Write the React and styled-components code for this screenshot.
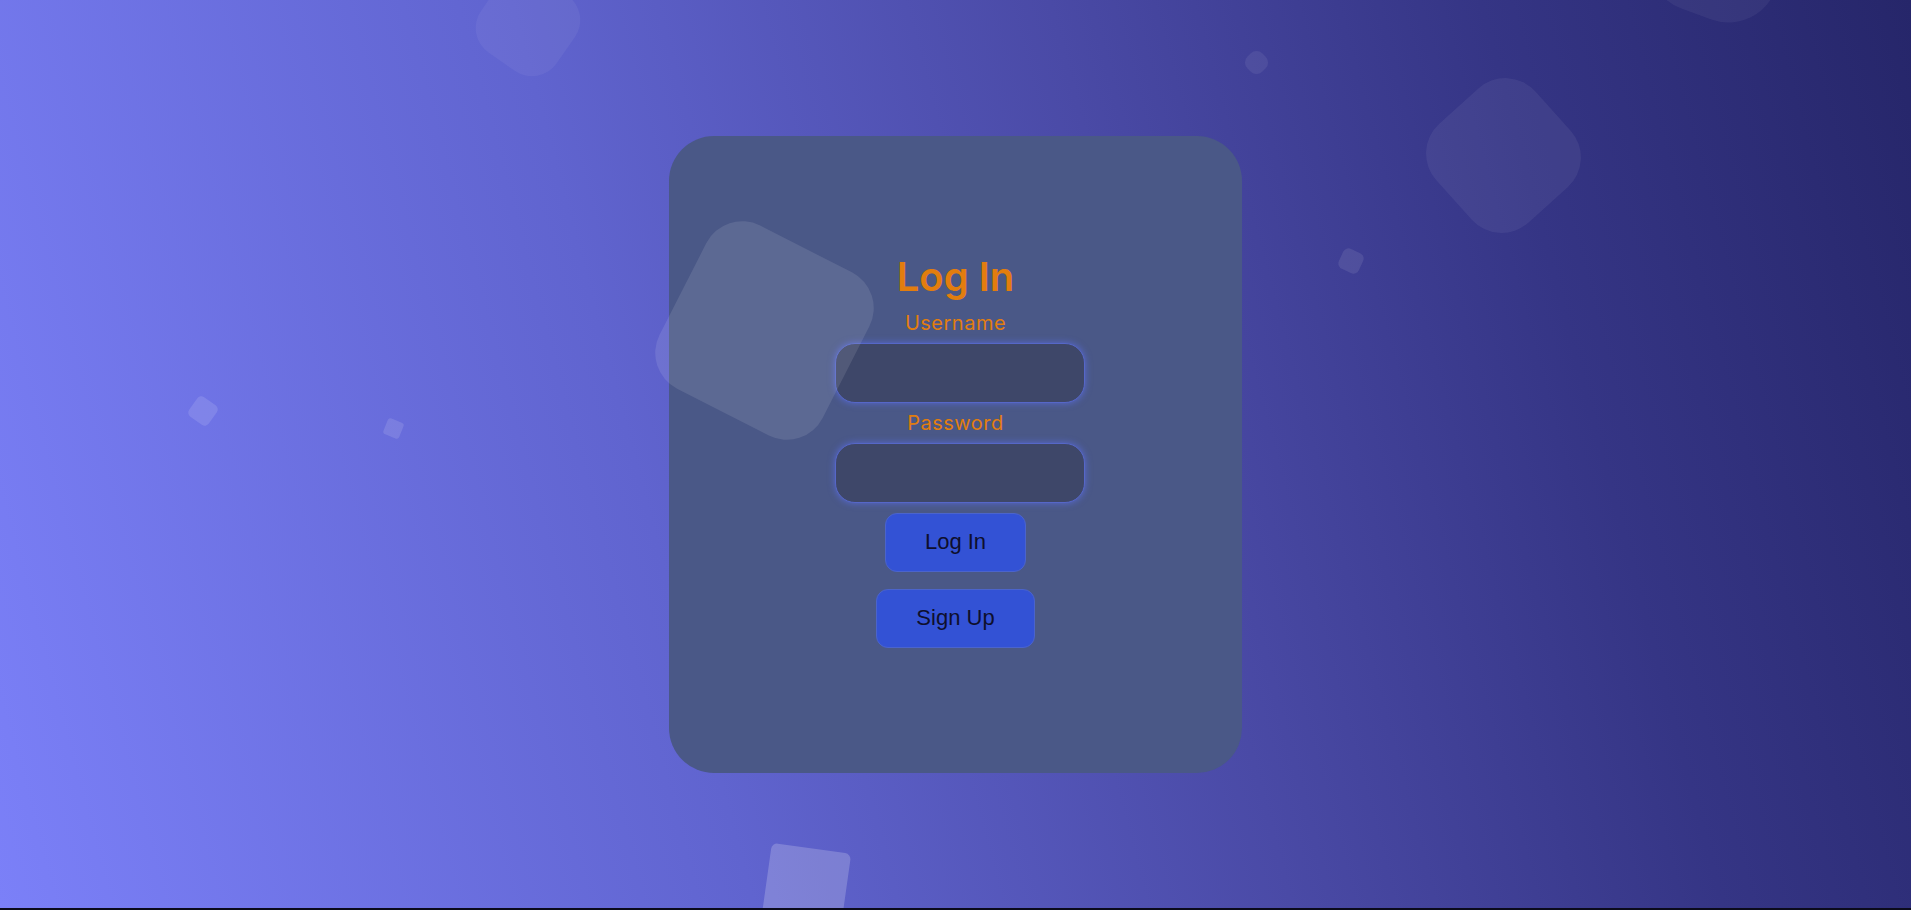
import React from "react";
import styled, { createGlobalStyle } from "styled-components";

const shapes = [
  { cx: 528, cy: 24, size: 92, radius: 30, rotate: 35, alpha: 0.05 },
  { cx: 1256, cy: 62, size: 21, radius: 8, rotate: 45, alpha: 0.07 },
  { cx: 1719, cy: -48, size: 132, radius: 50, rotate: 20, alpha: 0.05 },
  { cx: 1503, cy: 155, size: 133, radius: 40, rotate: -42, alpha: 0.06 },
  { cx: 1351, cy: 261, size: 22, radius: 6, rotate: 25, alpha: 0.09 },
  { cx: 203, cy: 411, size: 24, radius: 5, rotate: 35, alpha: 0.12 },
  { cx: 393, cy: 428, size: 17, radius: 3, rotate: 22, alpha: 0.12 },
  { cx: 764, cy: 330, size: 183, radius: 40, rotate: 27, alpha: 0.1 },
  { cx: 806, cy: 888, size: 80, radius: 6, rotate: 8, alpha: 0.2 },
];

const App = () => {
  return (
    <>
      <GlobalStyle />
      <Area>
        <Card onSubmit={(e) => e.preventDefault()}>
          <Title>Log In</Title>
          <Label htmlFor="username">Username</Label>
          <Field id="username" type="text" />
          <Label htmlFor="password">Password</Label>
          <Field id="password" type="password" $last />
          <Button type="submit">Log In</Button>
          <Button type="button">Sign Up</Button>
        </Card>
        <Floaters>
          {shapes.map((s, i) => (
            <Shape
              key={i}
              $x={s.cx - s.size / 2}
              $y={s.cy - s.size / 2}
              $size={s.size}
              $radius={s.radius}
              $rotate={s.rotate}
              $alpha={s.alpha}
            />
          ))}
        </Floaters>
      </Area>
    </>
  );
};

export default App;

const GlobalStyle = createGlobalStyle`
  html, body {
    margin: 0;
    padding: 0;
    overflow: hidden;
    background: #0b0b1c;
  }

  * {
    box-sizing: border-box;
  }
`;

const Area = styled.div`
  position: relative;
  width: 100%;
  height: calc(100vh - 2px);
  overflow: hidden;
  display: flex;
  align-items: center;
  justify-content: center;
  background: linear-gradient(
    75deg,
    #7b80f8 0%,
    #6064cf 35%,
    #4a4aa6 60%,
    #353585 80%,
    #26266a 100%
  );
`;

const Card = styled.form`
  width: 30%;
  height: 70vh;
  border-radius: 45px;
  background: #4a5887;
  display: flex;
  flex-direction: column;
  align-items: center;
  justify-content: center;
  padding-bottom: 8px;
`;

const Title = styled.h1`
  margin: 0 0 10px;
  font-family: Inter, "Liberation Sans", sans-serif;
  font-size: 40px;
  font-weight: 600;
  line-height: 48px;
  color: #e27d0e;
`;

const Label = styled.label`
  margin-bottom: 8px;
  font-family: Inter, "Liberation Sans", sans-serif;
  font-size: 20px;
  line-height: 24px;
  letter-spacing: 0.5px;
  color: #e27d0e;
`;

const Field = styled.input`
  width: 250px;
  height: 60px;
  margin: 0 0 ${(p) => (p.$last ? "10px" : "8px")} 9px;
  border-radius: 20px;
  border: 1px solid #5667c8;
  background: #3e4769;
  box-shadow: 0 0 7px rgba(92, 112, 240, 0.75);
  outline: none;
  padding: 0 16px;
  color: #fff;
  font-size: 18px;
`;

const Button = styled.button`
  height: 59px;
  padding: 0 39px;
  margin-bottom: 17px;
  border-radius: 12px;
  border: 1px solid #4b64cc;
  background: #3352d5;
  font-family: "Liberation Sans", Arial, sans-serif;
  font-size: 22px;
  color: #0e0f2c;
  cursor: pointer;

  &:last-child {
    margin-bottom: 0;
  }
`;

const Floaters = styled.div`
  position: absolute;
  inset: 0;
  pointer-events: none;
`;

const Shape = styled.span`
  position: absolute;
  left: ${(p) => p.$x}px;
  top: ${(p) => p.$y}px;
  width: ${(p) => p.$size}px;
  height: ${(p) => p.$size}px;
  border-radius: ${(p) => p.$radius}px;
  background: rgba(255, 255, 255, ${(p) => p.$alpha});
  transform: rotate(${(p) => p.$rotate}deg);
`;
